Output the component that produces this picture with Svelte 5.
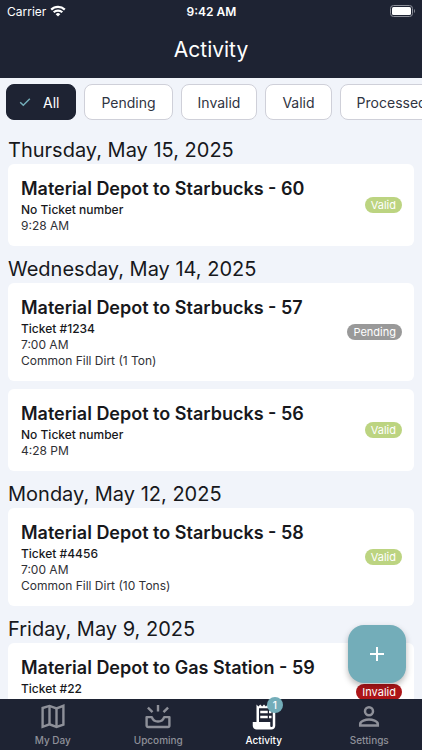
<script>
  let filters = ['All', 'Pending', 'Invalid', 'Valid', 'Processed'];
  let activeFilter = $state('All');
  let activeTab = $state('Activity');

  const days = [
    {
      date: 'Thursday, May 15, 2025',
      items: [
        { title: 'Material Depot to Starbucks - 60', ticket: 'No Ticket number', time: '9:28 AM', status: 'Valid' }
      ]
    },
    {
      date: 'Wednesday, May 14, 2025',
      items: [
        { title: 'Material Depot to Starbucks - 57', ticket: 'Ticket #1234', time: '7:00 AM', load: 'Common Fill Dirt (1 Ton)', status: 'Pending' },
        { title: 'Material Depot to Starbucks - 56', ticket: 'No Ticket number', time: '4:28 PM', status: 'Valid' }
      ]
    },
    {
      date: 'Monday, May 12, 2025',
      items: [
        { title: 'Material Depot to Starbucks - 58', ticket: 'Ticket #4456', time: '7:00 AM', load: 'Common Fill Dirt (10 Tons)', status: 'Valid' }
      ]
    },
    {
      date: 'Friday, May 9, 2025',
      items: [
        { title: 'Material Depot to Gas Station - 59', ticket: 'Ticket #22', status: 'Invalid' }
      ]
    }
  ];

  const tabs = ['My Day', 'Upcoming', 'Activity', 'Settings'];

  let visibleDays = $derived(
    days
      .map((day) => ({
        ...day,
        items: day.items.filter((item) => activeFilter === 'All' || item.status === activeFilter)
      }))
      .filter((day) => day.items.length > 0)
  );
</script>

<div class="app">
  <header>
    <div class="status-bar">
      <span class="carrier">
        Carrier
        <svg class="wifi" viewBox="0 0 16 12" fill="none" stroke="#fff" stroke-width="2.2">
          <path d="M1.2 4.6a9.7 9.7 0 0 1 13.6 0" />
          <path d="M3.7 7.3a6.1 6.1 0 0 1 8.6 0" />
          <path d="M5.7 9.2a3.3 3.3 0 0 1 4.6 0L8 11.6z" fill="#fff" stroke="none" />
        </svg>
      </span>
      <span class="clock">9:42 AM</span>
      <svg class="battery" viewBox="0 0 26 12">
        <rect x="0.5" y="0.5" width="22" height="11" rx="3" fill="none" stroke="#8c8f99" />
        <rect x="2" y="2" width="19" height="8" rx="1.5" fill="#fff" />
        <path d="M24 4v4c1.3-.5 1.3-3.5 0-4z" fill="#8c8f99" />
      </svg>
    </div>
    <h1>Activity</h1>
  </header>

  <div class="filters">
    {#each filters as filter}
      <button
        class="chip"
        class:active={filter === activeFilter}
        aria-pressed={filter === activeFilter}
        onclick={() => activeFilter = filter}
      >
        {#if filter === activeFilter}
          <svg class="check" viewBox="0 0 12 10" fill="none" stroke="currentColor" stroke-width="1.5">
            <path d="M1.2 5.2l3.1 3.1L10.8 1.7" />
          </svg>
        {/if}
        {filter}
      </button>
    {/each}
  </div>

  <main>
    {#each visibleDays as day}
      <section>
        <h2>{day.date}</h2>
        {#each day.items as item}
          <article class="card" class:ticketed={item.ticket.startsWith('Ticket')}>
            <div class="details">
              <h3>{item.title}</h3>
              <p class="ticket">{item.ticket}</p>
              {#if item.time}
                <p>{item.time}</p>
              {/if}
              {#if item.load}
                <p>{item.load}</p>
              {/if}
            </div>
            <span class="badge {item.status.toLowerCase()}">{item.status}</span>
          </article>
        {/each}
      </section>
    {/each}
  </main>

  <div class="footer">
    <button class="fab" aria-label="Add ticket">
      <svg viewBox="0 0 16 16" fill="none" stroke="#fff" stroke-width="2">
        <path d="M8 1v14M1 8h14" />
      </svg>
    </button>

    <nav>
      {#each tabs as tab}
        <button class="tab" class:active={tab === activeTab} onclick={() => activeTab = tab}>
          <span class="tab-icon">
            {#if tab === 'My Day'}
              <svg viewBox="0 0 28 28" fill="none" stroke="currentColor" stroke-width="2.4">
                <path d="M3.6 5l6.9-2.1 7 2.5 6.9-2.6v18.8l-6.9 2.3-7-2.5-6.9 2.5z" />
                <path d="M10.5 3v18.3M17.5 5.4v18.3" />
              </svg>
            {:else if tab === 'Upcoming'}
              <svg viewBox="0 0 28 28" fill="none" stroke="currentColor" stroke-width="2.4">
                <path d="M2.6 14.1h5.2c1 2.8 3.3 4.4 6.2 4.4s5.2-1.6 6.2-4.4h5.2v8.4a1.5 1.5 0 0 1-1.5 1.5H4.1a1.5 1.5 0 0 1-1.5-1.5z" stroke-linejoin="round" />
                <path d="M14 2v6.5M3.9 4.6l4.6 4.6M24.1 4.6l-4.6 4.6" />
              </svg>
            {:else if tab === 'Activity'}
              <svg viewBox="0.8 0.8 22.4 22.4" fill="currentColor">
                <path fill-rule="evenodd" d="M19.5 3.5L18 2l-1.5 1.5L15 2l-1.5 1.5L12 2l-1.5 1.5L9 2 7.5 3.5 6 2v14H3v3c0 1.66 1.34 3 3 3h12c1.66 0 3-1.34 3-3V2zM19 19c0 .55-.45 1-1 1s-1-.45-1-1v-3H8V5h11z" />
                <path d="M9 7h6v2H9zM16 7h2v2h-2zM9 11h6v2H9zM16 11h2v2h-2z" />
              </svg>
              <span class="count">1</span>
            {:else}
              <svg viewBox="0 0 28 28" fill="none" stroke="currentColor" stroke-width="2.5">
                <circle cx="14" cy="8.3" r="4" />
                <path d="M5.2 22.5v-1.6c0-2.9 5.7-4.4 8.8-4.4s8.8 1.5 8.8 4.4v1.6z" />
              </svg>
            {/if}
          </span>
          {tab}
        </button>
      {/each}
    </nav>
  </div>
</div>

<style>
  :global(body) {
    margin: 0;
    background: #f1f4fa;
  }

  .app {
    display: flex;
    flex-direction: column;
    height: 100vh;
    overflow: hidden;
    background: #f1f4fa;
    color: #17181c;
    font-family: Inter, "Liberation Sans", sans-serif;
  }

  button {
    padding: 0;
    border: none;
    font-family: inherit;
    cursor: pointer;
  }

  h1, h2, h3, p {
    margin: 0;
  }

  header {
    flex: none;
    background: #1e2333;
    color: #fff;
    text-align: center;
  }

  .status-bar {
    display: grid;
    grid-template-columns: 1fr auto 1fr;
    align-items: center;
    height: 22px;
    padding: 0 6px 0 7px;
    font-size: 12px;
  }

  .carrier {
    display: flex;
    align-items: center;
    gap: 4px;
  }

  .wifi {
    width: 16px;
    height: 12px;
  }

  .clock {
    font-weight: 600;
  }

  .battery {
    justify-self: end;
    width: 26px;
    height: 12px;
  }

  h1 {
    padding: 13px 0;
    font-size: 21px;
    font-weight: 400;
    line-height: 30px;
  }

  .filters {
    display: flex;
    flex: none;
    gap: 8px;
    padding: 6px 6px 15px;
    overflow-x: auto;
    scrollbar-width: none;
  }

  .chip {
    display: flex;
    flex: none;
    align-items: center;
    gap: 12px;
    height: 36px;
    padding: 0 16px;
    border: 1px solid #cfd0d9;
    border-radius: 8px;
    background: #fff;
    color: #303442;
    font-size: 14px;
  }

  .chip.active {
    padding: 0 16px 0 12px;
    border-color: #1e2333;
    background: #1e2333;
    color: #fff;
  }

  .check {
    width: 12px;
    height: 10px;
    color: #73adb9;
  }

  main {
    flex: 1;
    min-height: 0;
    padding: 0 8px;
    overflow-y: auto;
    scrollbar-width: none;
  }

  h2 {
    padding-top: 2px;
    font-size: 20px;
    font-weight: 400;
    line-height: 27px;
  }

  .card {
    display: flex;
    align-items: center;
    justify-content: space-between;
    box-sizing: border-box;
    margin-bottom: 8px;
    padding: 12px 12px 12px 13px;
    border-radius: 6px;
    background: #fff;
  }

  .card.ticketed {
    min-height: 98px;
  }

  .details {
    align-self: flex-start;
  }

  h3 {
    font-size: 18px;
    font-weight: 600;
    line-height: 26px;
  }

  p {
    color: #303136;
    font-size: 12px;
    line-height: 16px;
  }

  .ticket {
    color: #17181c;
    font-weight: 500;
  }

  .badge {
    padding: 0 6px;
    border-radius: 8px;
    color: #fff;
    font-size: 11px;
    line-height: 16px;
  }

  .valid {
    background: #bcd481;
  }

  .pending {
    background: #999;
  }

  .invalid {
    background: #ad1518;
  }

  .footer {
    position: relative;
    flex: none;
  }

  /* Floats over the list, just above the tab bar */
  .fab {
    position: absolute;
    right: 16px;
    bottom: 100%;
    display: grid;
    place-items: center;
    width: 58px;
    height: 58px;
    margin-bottom: 16px;
    border-radius: 16px;
    background: #73adb9;
    box-shadow: 0 3px 6px rgba(0, 0, 0, 0.28);
  }

  .fab svg {
    width: 16px;
    height: 16px;
  }

  nav {
    display: grid;
    grid-template-columns: repeat(4, 1fr);
    background: #1e2333;
  }

  .tab {
    display: flex;
    flex-direction: column;
    align-items: center;
    gap: 2px;
    padding: 4px 0 3px;
    background: none;
    color: #8e9099;
    font-size: 10px;
    font-weight: 500;
    line-height: 14px;
  }

  .tab.active {
    color: #fff;
  }

  .tab-icon {
    position: relative;
    height: 28px;
  }

  .tab-icon svg {
    display: block;
    width: 28px;
    height: 28px;
  }

  .count {
    position: absolute;
    top: -6px;
    right: -5px;
    width: 16px;
    border-radius: 8px;
    background: #73adb9;
    color: #fff;
    font-size: 10px;
    line-height: 16px;
    text-align: center;
  }
</style>
